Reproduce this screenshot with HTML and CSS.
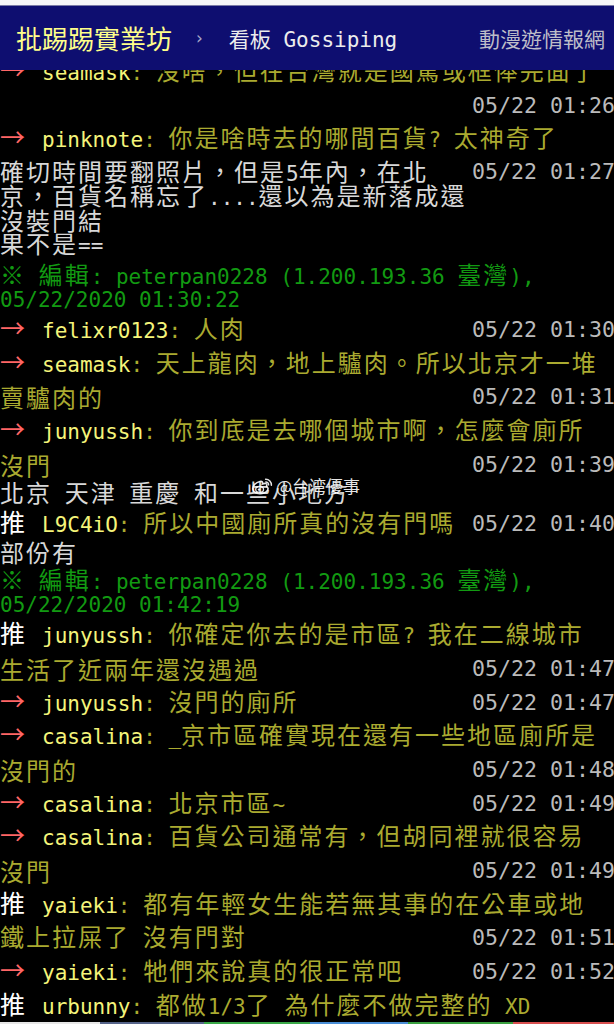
FILE: index.html
```html
<!DOCTYPE html>
<html lang="zh-Hant">
<head>
<meta charset="utf-8">
<title>批踢踢實業坊 › 看板 Gossiping</title>
<link rel="stylesheet" href="styles.css">
</head>
<body>
<header class="topbar">
  <span class="brand">批踢踢實業坊</span>
  <span class="sep">›</span>
  <span class="board">看板<span class="m"> Gossiping</span></span>
  <span class="site">動漫遊情報網</span>
</header>

<main class="content">
  <div class="row"><span class="line"><span class="tag arrow">→</span><span class="uid">seamask</span><span class="msg"><span class="m">: </span>沒啥，但在台灣就是國罵或框俸完面了</span></span></div>
  <div class="row"><span class="ts m">05/22 01:26</span></div>
  <div class="row"><span class="line"><span class="tag arrow">→</span><span class="uid">pinknote</span><span class="msg"><span class="m">: </span>你是啥時去的哪間百貨<span class="m">? </span>太神奇了</span></span></div>
  <div class="row text first"><span class="line">確切時間要翻照片，但是<span class="m">5</span>年內，在北</span><span class="ts m">05/22 01:27</span></div>
  <div class="row text"><span class="line">京，百貨名稱忘了<span class="m">....</span>還以為是新落成還</span></div>
  <div class="row text"><span class="line">沒裝門結</span></div>
  <div class="row text"><span class="line">果不是<span class="m">==</span></span></div>
  <div class="row edit first"><span class="line">※<span class="m"> </span>編輯<span class="m">: peterpan0228 (1.200.193.36 </span>臺灣<span class="m">),</span></span></div>
  <div class="row edit"><span class="line m">05/22/2020 01:30:22</span></div>
  <div class="row"><span class="line"><span class="tag arrow">→</span><span class="uid">felixr0123</span><span class="msg"><span class="m">: </span>人肉</span></span><span class="ts m">05/22 01:30</span></div>
  <div class="row"><span class="line"><span class="tag arrow">→</span><span class="uid">seamask</span><span class="msg"><span class="m">: </span>天上龍肉，地上驢肉。所以北京才一堆</span></span></div>
  <div class="row"><span class="line msg">賣驢肉的</span><span class="ts m">05/22 01:31</span></div>
  <div class="row"><span class="line"><span class="tag arrow">→</span><span class="uid">junyussh</span><span class="msg"><span class="m">: </span>你到底是去哪個城市啊，怎麼會廁所</span></span></div>
  <div class="row"><span class="line msg">沒門</span><span class="ts m">05/22 01:39</span></div>
  <div class="row text"><span class="line">北京<span class="m"> </span>天津<span class="m"> </span>重慶<span class="m"> </span>和一些小地方</span></div>
  <div class="row after-text"><span class="line"><span class="tag push">推</span><span class="uid">L9C4iO</span><span class="msg"><span class="m">: </span>所以中國廁所真的沒有門嗎</span></span><span class="ts m">05/22 01:40</span></div>
  <div class="row text"><span class="line">部份有</span></div>
  <div class="row edit first-short"><span class="line">※<span class="m"> </span>編輯<span class="m">: peterpan0228 (1.200.193.36 </span>臺灣<span class="m">),</span></span></div>
  <div class="row edit"><span class="line m">05/22/2020 01:42:19</span></div>
  <div class="row"><span class="line"><span class="tag push">推</span><span class="uid">junyussh</span><span class="msg"><span class="m">: </span>你確定你去的是市區<span class="m">? </span>我在二線城市</span></span></div>
  <div class="row"><span class="line msg">生活了近兩年還沒遇過</span><span class="ts m">05/22 01:47</span></div>
  <div class="row"><span class="line"><span class="tag arrow">→</span><span class="uid">junyussh</span><span class="msg"><span class="m">: </span>沒門的廁所</span></span><span class="ts m">05/22 01:47</span></div>
  <div class="row"><span class="line"><span class="tag arrow">→</span><span class="uid">casalina</span><span class="msg"><span class="m">: _</span>京市區確實現在還有一些地區廁所是</span></span></div>
  <div class="row"><span class="line msg">沒門的</span><span class="ts m">05/22 01:48</span></div>
  <div class="row"><span class="line"><span class="tag arrow">→</span><span class="uid">casalina</span><span class="msg"><span class="m">: </span>北京市區<span class="m">~</span></span></span><span class="ts m">05/22 01:49</span></div>
  <div class="row"><span class="line"><span class="tag arrow">→</span><span class="uid">casalina</span><span class="msg"><span class="m">: </span>百貨公司通常有，但胡同裡就很容易</span></span></div>
  <div class="row"><span class="line msg">沒門</span><span class="ts m">05/22 01:49</span></div>
  <div class="row"><span class="line"><span class="tag push">推</span><span class="uid">yaieki</span><span class="msg"><span class="m">: </span>都有年輕女生能若無其事的在公車或地</span></span></div>
  <div class="row"><span class="line msg">鐵上拉屎了<span class="m"> </span>沒有門對</span><span class="ts m">05/22 01:51</span></div>
  <div class="row"><span class="line"><span class="tag arrow">→</span><span class="uid">yaieki</span><span class="msg"><span class="m">: </span>牠們來說真的很正常吧</span></span><span class="ts m">05/22 01:52</span></div>
  <div class="row"><span class="line"><span class="tag push">推</span><span class="uid">urbunny</span><span class="msg"><span class="m">: </span>都做<span class="m">1/3</span>了<span class="m"> </span>為什麼不做完整的<span class="m"> XD</span></span></span></div>
</main>

<div class="watermark">
  <svg class="weibo" width="22" height="19" viewBox="0 0 22 19" aria-hidden="true">
    <path d="M9 4.5 C4.5 5.5 1.2 9 1.8 12.3 C2.6 16.4 8.6 17.6 12.8 16 C16.8 14.5 18 11.6 16.2 10.2 C15.3 9.6 15.6 8.9 15.8 8 C16.1 6.3 14.2 5.8 11.4 7 C11.9 5.2 11.2 4 9 4.5 Z" fill="none" stroke="#fff" stroke-width="1.6"/>
    <ellipse cx="8.6" cy="12.4" rx="3.9" ry="2.9" fill="none" stroke="#fff" stroke-width="1.3"/>
    <circle cx="8" cy="12.6" r="1.2" fill="#fff"/>
    <path d="M14.6 2.2 A5.6 5.6 0 0 1 20.4 8.2" fill="none" stroke="#fff" stroke-width="1.5" stroke-linecap="round"/>
    <path d="M14.8 5 A2.8 2.8 0 0 1 17.6 7.9" fill="none" stroke="#fff" stroke-width="1.4" stroke-linecap="round"/>
  </svg>
  <span class="wm-text">@台湾優事</span>
</div>

<div class="nav-strip"></div>
</body>
</html>
```

FILE: styles.css
```css
* {
  box-sizing: border-box;
}

html,
body {
  margin: 0;
  padding: 0;
}

body {
  position: relative;
  width: 614px;
  height: 1024px;
  overflow: hidden;
  background: #000;
  color: #d8d8d8;
  font-family: "Noto Sans CJK SC", "Noto Sans CJK TC", sans-serif;
  font-size: 24px;
  letter-spacing: 2px;
}

.m {
  font-family: "DejaVu Sans Mono", "Liberation Mono", monospace;
  font-size: 21px;
  letter-spacing: 0;
}

/* top bar */
.topbar {
  position: fixed;
  top: 0;
  left: 0;
  z-index: 5;
  width: 614px;
  height: 70px;
  display: flex;
  align-items: center;
  padding: 0 9px 0 16px;
  background: #0e0e70;
  border-top: 5px solid #f6f6f8;
  box-shadow: inset 0 1px 0 #7b7ba6;
  white-space: nowrap;
  letter-spacing: 0;
  font-family: "Noto Sans CJK TC", "Noto Sans CJK SC", sans-serif;
}

.brand {
  font-size: 26px;
  color: #ffff8a;
}

.sep {
  margin: 0 26px 0 24px;
  font-family: "DejaVu Sans", sans-serif;
  font-size: 17px;
  color: #a8a8c8;
}

.board {
  font-size: 21px;
  color: #ececec;
}

.site {
  margin-left: auto;
  font-size: 21px;
  color: #bdbdc8;
}

/* article lines */
.content {
  padding-top: 55px;
}

.row {
  display: flex;
  align-items: center;
  height: 33.7px;
  line-height: 33.7px;
  white-space: nowrap;
}

.row.text {
  height: 24px;
  line-height: 24px;
}

.row.edit {
  height: 25px;
  line-height: 25px;
  color: #129a12;
}

.row.first {
  margin-top: 4px;
}

.row.edit.first {
  margin-top: 6px;
  height: 26px;
}

.row.edit.first-short {
  margin-top: 3px;
  height: 26px;
}

.row.after-text {
  margin-top: 1px;
}

.line {
  flex: none;
}

.tag {
  display: inline-block;
  width: 42px;
  font-size: 25px;
}

.tag.arrow {
  color: #ff6666;
}

.tag.push {
  color: #ffffff;
}

.uid {
  font-family: "DejaVu Sans Mono", "Liberation Mono", monospace;
  font-size: 21px;
  letter-spacing: 0;
  color: #f4f47a;
}

.msg {
  color: #aaaa30;
}

.ts {
  margin-left: auto;
  margin-right: -1px;
  font-size: 21.6px;
  color: #bbbbbb;
}

/* watermark over content */
.watermark {
  position: absolute;
  left: 251px;
  top: 476px;
  display: flex;
  align-items: center;
  gap: 3px;
  opacity: 0.9;
  letter-spacing: 0;
}

.wm-text {
  font-size: 17px;
  line-height: 20px;
  color: #fff;
  text-shadow: 0 0 2px rgba(0, 0, 0, 0.6);
}

/* coloured strip at bottom edge */
.nav-strip {
  position: fixed;
  left: 0;
  bottom: 0;
  width: 614px;
  height: 2px;
  background: linear-gradient(to right,
    #e6e6e6 0 100px,
    #56648a 100px 204px,
    #3aa848 204px 310px,
    #4a8ed6 310px 408px,
    #3aa040 408px 513px,
    #d85050 513px 614px);
}
```
